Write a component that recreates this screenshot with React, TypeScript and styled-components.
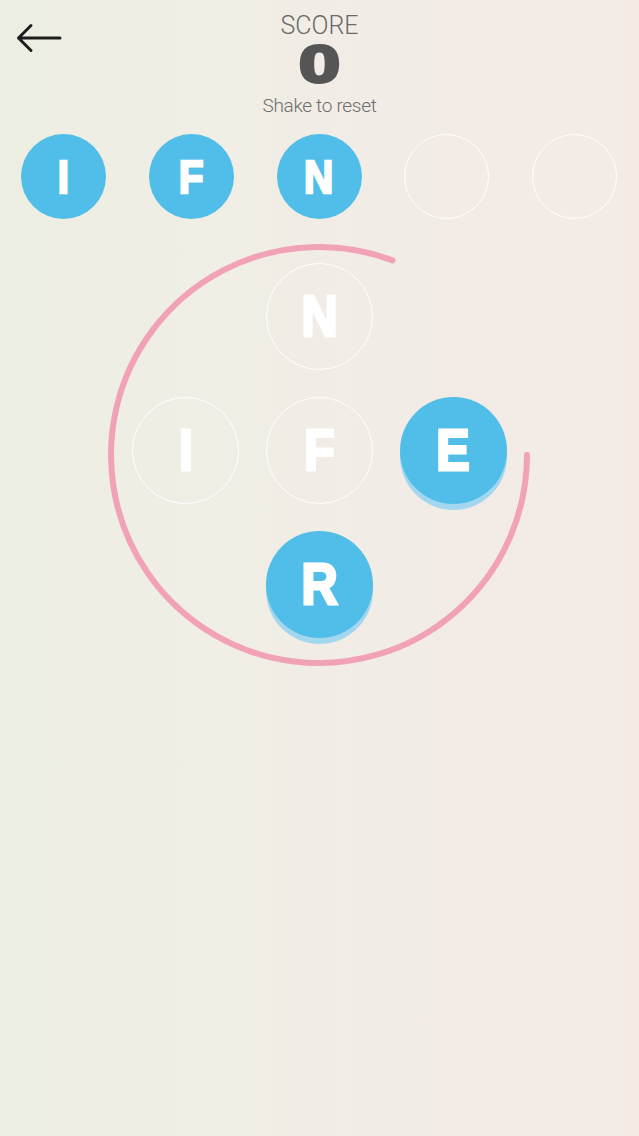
import React from "react";
import styled, { createGlobalStyle } from "styled-components";

const GlobalStyle = createGlobalStyle`
  html, body { margin: 0; padding: 0; }
  body {
    min-height: 1136px;
    background: linear-gradient(90deg, #edeee2 0%, #f0eee5 35%, #f2ece6 60%, #f4ebe5 100%);
    font-family: Roboto, "Liberation Sans", sans-serif;
  }
  #root { min-height: 1136px; }
`;

const Page = styled.div`
  width: 639px;
  min-height: 1136px;
  margin: 0 auto;
  display: flex;
  flex-direction: column;
`;

const Header = styled.header`
  display: grid;
  grid-template-columns: 1fr auto 1fr;
  padding-top: 14px;
`;

const BackButton = styled.button`
  justify-self: start;
  align-self: start;
  margin: 9px 0 0 15px;
  padding: 0;
  border: none;
  background: transparent;
  width: 50px;
  height: 30px;
  display: flex;
`;

const ScoreBlock = styled.div`
  display: flex;
  flex-direction: column;
  align-items: center;
`;

const ScoreLabel = styled.div`
  font-family: Roboto, "Liberation Sans", sans-serif;
  font-weight: 300;
  font-size: 25px;
  line-height: 24px;
  color: #6a6a6a;
  letter-spacing: 0;
`;

const ScoreValue = styled.div`
  margin-top: 4px;
  font-family: "Liberation Sans", Arial, sans-serif;
  font-weight: 700;
  font-size: 52px;
  line-height: 44px;
  height: 44px;
  color: #555555;
  -webkit-text-stroke: 3px #555555;
  transform: scaleX(1.42);
`;

const Hint = styled.div`
  margin-top: 10px;
  font-family: Roboto, "Liberation Sans", sans-serif;
  font-weight: 300;
  font-size: 19px;
  line-height: 19px;
  color: #6e6e6e;
  letter-spacing: -0.3px;
`;

const SlotRow = styled.div`
  margin-top: 19px;
  padding: 0 22px 0 21px;
  display: flex;
  justify-content: space-between;
`;

type Variant = "filled" | "outline" | "raised";

const Tile = styled.div<{ $size: number; $font: number; $variant: Variant; $row?: number; $col?: number }>`
  width: ${(p) => p.$size}px;
  height: ${(p) => p.$size}px;
  box-sizing: border-box;
  border-radius: 50%;
  display: flex;
  align-items: center;
  justify-content: center;
  grid-row: ${(p) => p.$row ?? "auto"};
  grid-column: ${(p) => p.$col ?? "auto"};
  background: ${(p) => (p.$variant === "outline" ? "transparent" : "#50bee8")};
  border: ${(p) => (p.$variant === "outline" ? "1.5px solid #ffffff" : "none")};
  box-shadow: ${(p) => (p.$variant === "raised" ? "0 6px 0 #a3d7ef" : "none")};
  font-family: "Liberation Sans", Arial, sans-serif;
  font-weight: 700;
  font-size: ${(p) => p.$font}px;
  line-height: 1;
  color: #ffffff;
  -webkit-text-stroke: ${(p) => (p.$font > 50 ? 3 : 2.5)}px #ffffff;
`;

const Letter = styled.span`
  display: inline-block;
  transform: scaleX(0.88);
`;

const Board = styled.div`
  position: relative;
  margin-top: 44px;
  height: 420px;
`;

const Arc = styled.svg`
  position: absolute;
  left: 0;
  top: -44px;
  width: 639px;
  height: 460px;
  pointer-events: none;
`;

const Grid = styled.div`
  position: relative;
  z-index: 1;
  display: grid;
  grid-template-columns: repeat(3, 107px);
  grid-template-rows: repeat(3, 107px);
  gap: 27px;
  justify-content: center;
`;

const slots: (string | null)[] = ["I", "F", "N", null, null];

const boardTiles: { ch: string; row: number; col: number; variant: Variant }[] = [
  { ch: "N", row: 1, col: 2, variant: "outline" },
  { ch: "I", row: 2, col: 1, variant: "outline" },
  { ch: "F", row: 2, col: 2, variant: "outline" },
  { ch: "E", row: 2, col: 3, variant: "raised" },
  { ch: "R", row: 3, col: 2, variant: "raised" },
];

export default function App() {
  return (
    <>
      <GlobalStyle />
      <Page>
        <Header>
          <BackButton aria-label="Back">
            <svg width="50" height="30" viewBox="0 0 50 30" fill="none">
              <path
                d="M3.5 15 H45 M3.5 15 L16 2.5 M3.5 15 L16 27.5"
                stroke="#1e1e1e"
                strokeWidth="3"
                strokeLinecap="round"
                strokeLinejoin="round"
              />
            </svg>
          </BackButton>
          <ScoreBlock>
            <ScoreLabel>SCORE</ScoreLabel>
            <ScoreValue>0</ScoreValue>
            <Hint>Shake to reset</Hint>
          </ScoreBlock>
          <div />
        </Header>

        <SlotRow>
          {slots.map((ch, i) => (
            <Tile key={i} $size={85} $font={46} $variant={ch ? "filled" : "outline"}>
              {ch && <Letter>{ch}</Letter>}
            </Tile>
          ))}
        </SlotRow>

        <Board>
          <Arc viewBox="0 219 639 460">
            <path
              d="M 527 455 A 208 208 0 1 1 392.5 260.4"
              fill="none"
              stroke="#f2a2b6"
              strokeWidth="6"
              strokeLinecap="round"
            />
          </Arc>
          <Grid>
            {boardTiles.map((t) => (
              <Tile key={t.ch} $size={107} $font={57} $variant={t.variant} $row={t.row} $col={t.col}>
                <Letter>{t.ch}</Letter>
              </Tile>
            ))}
          </Grid>
        </Board>
      </Page>
    </>
  );
}
